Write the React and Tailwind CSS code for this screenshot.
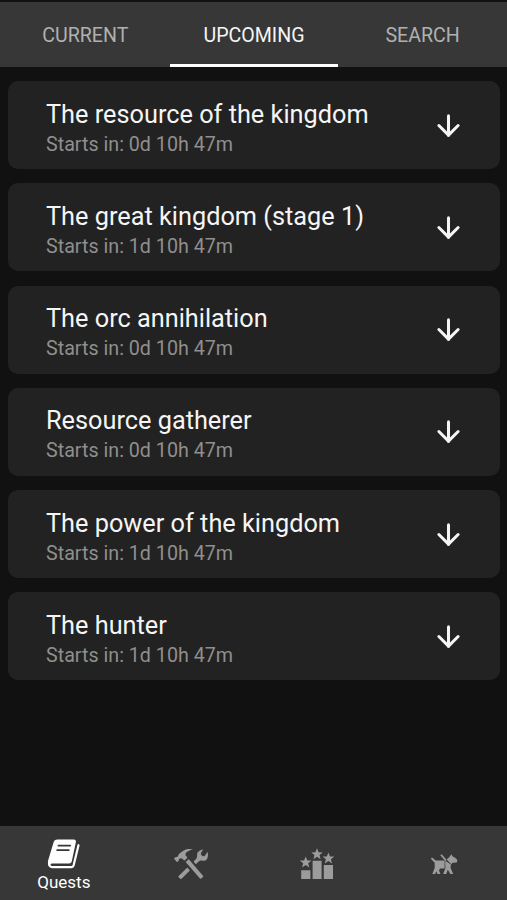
import { useState } from 'react';
import { ArrowDown } from 'lucide-react';

const tabs = ['Current', 'Upcoming', 'Search'];

const quests = [
    { title: 'The resource of the kingdom', startsIn: '0d 10h 47m' },
    { title: 'The great kingdom (stage 1)', startsIn: '1d 10h 47m' },
    { title: 'The orc annihilation', startsIn: '0d 10h 47m' },
    { title: 'Resource gatherer', startsIn: '0d 10h 47m' },
    { title: 'The power of the kingdom', startsIn: '1d 10h 47m' },
    { title: 'The hunter', startsIn: '1d 10h 47m' },
];

function BookIcon() {
    return (
        <svg viewBox="0 0 34 30" className="mt-0.5 mb-0.5 w-[34px] h-[30px]" fill="none">
            {/* cover and spine */}
            <path
                fill="currentColor"
                d="M10.6.6h16.2c1.5 0 2.4 1.1 2.1 2.5l-4.1 19.1c-.3 1.4-1.2 2.2-2.6 2.2H5.8c-1.3 0-2.2.4-2.4 1.5L1.2 24.5c-.4-1-.3-2 0-3.2L6.3 4.2C7 1.7 8.2.6 10.6.6Z"
            />
            <path
                stroke="currentColor"
                strokeWidth="2.2"
                strokeLinecap="round"
                strokeLinejoin="round"
                d="M31.5 6.2 26.7 26c-.4 1.5-1.1 2.1-2.5 2.1H5.3C3 28.1 1.8 26.4 2 23.8"
            />
            <path className="stroke-[#373737]" strokeWidth="1.7" strokeLinecap="round" d="M11.4 6.6h11.8M10.1 11.1h11.8" />
        </svg>
    );
}

function ToolsIcon() {
    return (
        <svg viewBox="0 0 20 20" className="ml-0.5 mt-px w-[34px] h-[34px]" fill="currentColor">
            <path d="M3.135 6.89c.933-.725 1.707-.225 2.74.971.116.135.272-.023.361-.1.088-.078 1.451-1.305 1.518-1.361.066-.059.146-.169.041-.292a36.238 36.238 0 0 1-.743-.951c-1.808-2.365 4.946-3.969 3.909-3.994-.528-.014-2.646-.039-2.963-.004-1.283.135-2.894 1.334-3.705 1.893-1.061.726-1.457 1.152-1.522 1.211-.3.262-.048.867-.592 1.344-.575.503-.934.122-1.267.414-.165.146-.627.492-.759.607-.133.117-.157.314-.021.471 0 0 1.264 1.396 1.37 1.52.105.122.391.228.567.071.177-.156.632-.553.708-.623.078-.066-.05-.861.358-1.177zm5.708.517c-.12-.139-.269-.143-.397-.029L7.012 8.63a.289.289 0 0 0-.027.4l8.294 9.439c.194.223.53.246.751.053l.97-.813a.54.54 0 0 0 .052-.758L8.843 7.407zM19.902 3.39c-.074-.494-.33-.391-.463-.182-.133.211-.721 1.102-.963 1.506-.24.4-.832 1.191-1.934.41-1.148-.811-.749-1.377-.549-1.758.201-.383.818-1.457.907-1.59.089-.135-.015-.527-.371-.363-.357.164-2.523 1.025-2.823 2.26-.307 1.256.257 2.379-.85 3.494l-1.343 1.4 1.349 1.566 1.654-1.57c.394-.396 1.236-.781 1.998-.607 1.633.369 2.524-.244 3.061-1.258.482-.906.402-2.814.327-3.308zM2.739 17.053a.538.538 0 0 0 0 .758l.951.93c.208.209.538.121.746-.088l4.907-4.824-1.503-1.714-5.101 4.938z" />
        </svg>
    );
}

const star = 'M0-6 1.6-1.9 5.8-1.8 2.5.9 3.6 5 0 2.6-3.6 5-2.5.9-5.8-1.8-1.6-1.9Z';

function RankingIcon() {
    return (
        <svg viewBox="0 0 34 34" className="mt-1 ml-px w-[34px] h-[34px]" fill="currentColor">
            <path d="M1.2 22.3h9.2V31H1.2zM12.6 12.8h9V31h-9zM23.8 17h9.2v14h-9.2z" />
            <path d={star} transform="translate(5.7 14.4)" />
            <path d={star} transform="translate(17 6.2)" />
            <path d={star} transform="translate(28.4 10.4)" />
        </svg>
    );
}

function DogIcon() {
    return (
        <svg viewBox="0 0 28 22" className="ml-px mt-1 w-[28px] h-[22px]" fill="currentColor">
            <path d="M.8 4.8 2 3.6l3.8 2.8h8.8v8.2H10l-1 1.6 1.4 3.9H7.5l-1.3-2.9-1 2.9H2.3L4.7 14V8.8Z" />
            <path d="m10.3 1.3 1.4-1 4.8 5.4-1.2 1.4Z" />
            <path d="m15.2 6.8 5.8 3.8-.5 3.2 2.7 6.3h-2.8l-2.6-4.3-1.6 4.3h-3l2.2-6Z" />
            <path d="m16.6 5.4 2.6-2.2L21.4.2l1.2 2.2 1.8.8 3 2.8-.6 2.6-4.2.2-1.3 1.4Z" />
        </svg>
    );
}

const navItems = [
    { id: 'quests', label: 'Quests', icon: BookIcon },
    { id: 'tools', icon: ToolsIcon },
    { id: 'ranking', icon: RankingIcon },
    { id: 'pets', icon: DogIcon },
];

function QuestCard({ quest }) {
    return (
        <div className="flex h-[88px] items-center justify-between rounded-[10px] bg-[#222222] pl-[38px] pr-[35px]">
            <div className="pt-1.5">
                <h2 className="text-[25.3px] leading-[32px] text-[#f5f5f5]">{quest.title}</h2>
                <p className="text-[19.7px] leading-[27px] text-[#8f8f8d]">Starts in: {quest.startsIn}</p>
            </div>
            <ArrowDown className="h-[33px] w-[33px] text-[#f5f5f5]" strokeWidth={2.2} />
        </div>
    );
}

export default function App() {
    const [activeTab, setActiveTab] = useState('Upcoming');
    const [activeNav, setActiveNav] = useState('quests');

    return (
        <div className="flex h-screen flex-col bg-[#111111] pt-0.5 font-['Roboto',sans-serif]">
            <div className="grid h-[65px] shrink-0 grid-cols-3 bg-[#373737] pl-px">
                {tabs.map((tab) => (
                    <button
                        key={tab}
                        onClick={() => setActiveTab(tab)}
                        className={`border-b-[3px] pt-1.5 text-[19.6px] uppercase ${
                            activeTab === tab ? 'border-white text-[#f5f5f5]' : 'border-transparent text-[#b0b0b0]'
                        }`}
                    >
                        {tab}
                    </button>
                ))}
            </div>

            <div className="flex flex-1 flex-col gap-[14.3px] pl-2 pr-[7px] pt-3.5">
                {quests.map((quest) => (
                    <QuestCard key={quest.title} quest={quest} />
                ))}
            </div>

            <div className="grid h-[74px] shrink-0 grid-cols-4 bg-[#373737]">
                {navItems.map(({ id, label, icon: Icon }) => (
                    <button
                        key={id}
                        onClick={() => setActiveNav(id)}
                        className={`flex flex-col items-center justify-center ${
                            activeNav === id ? 'pl-px pt-[3px] text-white' : 'text-[#9c9c9c]'
                        }`}
                    >
                        <Icon />
                        {label && <span className="text-[17px] leading-[22px]">{label}</span>}
                    </button>
                ))}
            </div>
        </div>
    );
}
